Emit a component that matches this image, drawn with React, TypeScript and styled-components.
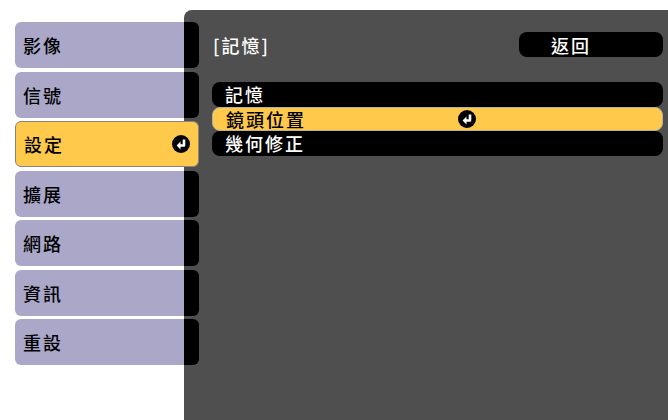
import { createGlobalStyle } from "styled-components";
import styled from "styled-components";

const GlobalStyle = createGlobalStyle`
  html, body {
    margin: 0;
    padding: 0;
    background: #ffffff;
  }
  body {
    font-family: "Noto Sans CJK TC", "Noto Sans CJK SC", "Liberation Sans", sans-serif;
  }
`

const Screen = styled.div`
  width: 668px;
  height: 420px;
  display: flex;
  flex-direction: row;
  padding-top: 10px;
  box-sizing: border-box;
  overflow: hidden;
`

const Menu = styled.div`
  position: relative;
  z-index: 1;
  width: 199px;
  flex: none;
  display: flex;
  flex-direction: column;
  gap: 3.5px;
  padding: 12px 0 0 15px;
  box-sizing: border-box;
`

const MenuItem = styled.div<{ $active?: boolean }>`
  height: 46px;
  display: flex;
  align-items: center;
  justify-content: space-between;
  padding: 0 8px 0 8px;
  box-sizing: border-box;
  border-radius: 6px;
  font-size: 18px;
  font-weight: 500;
  letter-spacing: 2px;
  color: #000;
  background: ${p => p.$active
    ? "#ffc94b"
    : "linear-gradient(to right, #aaa7c8 0, #aaa7c8 169px, #000 169px)"};
  border: ${p => p.$active ? "1px solid #8a8478" : "none"};
`

const Panel = styled.div`
  flex: 1;
  margin-left: -15px;
  background: #4f4f4f;
  border-top-left-radius: 8px;
  padding: 22px 5px 0 28px;
  display: flex;
  flex-direction: column;
`

const Header = styled.div`
  display: flex;
  align-items: center;
  justify-content: space-between;
  height: 25px;
`

const Title = styled.div`
  color: #fff;
  font-size: 18px;
  font-weight: 500;
  letter-spacing: 2px;
  margin-left: 1px;
`

const BackButton = styled.div`
  width: 144px;
  height: 25px;
  border-radius: 8px;
  background: #000;
  color: #fff;
  font-size: 18px;
  font-weight: 500;
  letter-spacing: 2px;
  display: flex;
  align-items: center;
  padding-left: 32px;
  box-sizing: border-box;
`

const List = styled.div`
  margin-top: 25px;
  display: flex;
  flex-direction: column;
`

const Row = styled.div<{ $active?: boolean }>`
  height: 24.5px;
  display: flex;
  align-items: center;
  padding-left: 13px;
  box-sizing: border-box;
  border-radius: 8px;
  font-size: 18px;
  font-weight: 500;
  letter-spacing: 2px;
  color: ${p => p.$active ? "#000" : "#fff"};
  background: ${p => p.$active ? "#ffc94b" : "#000"};
  border: ${p => p.$active ? "1px solid #b8b0a0" : "none"};
`

const RowLabel = styled.span`
  width: 232px;
`

function EnterIcon() {
  return (
    <svg width="18" height="18" viewBox="0 0 18 18">
      <circle cx="9" cy="9" r="9" fill="#000" />
      <path d="M12 4.5v6H7.5" fill="none" stroke="#fff" strokeWidth="2.6" strokeLinejoin="round" />
      <path d="M8.5 6.6L4.6 10.5 8.5 14.4z" fill="#fff" />
    </svg>
  )
}

const menuItems = ["影像", "信號", "設定", "擴展", "網路", "資訊", "重設"];
const rows = ["記憶", "鏡頭位置", "幾何修正"];

export default function App() {
  return <>
    <GlobalStyle />
    <Screen>
      <Menu>
        {menuItems.map(item => (
          <MenuItem key={item} $active={item === "設定"}>
            <span>{item}</span>
            {item === "設定" && <EnterIcon />}
          </MenuItem>
        ))}
      </Menu>
      <Panel>
        <Header>
          <Title>[記憶]</Title>
          <BackButton>返回</BackButton>
        </Header>
        <List>
          {rows.map(row => (
            <Row key={row} $active={row === "鏡頭位置"}>
              <RowLabel>{row}</RowLabel>
              {row === "鏡頭位置" && <EnterIcon />}
            </Row>
          ))}
        </List>
      </Panel>
    </Screen>
  </>
}
